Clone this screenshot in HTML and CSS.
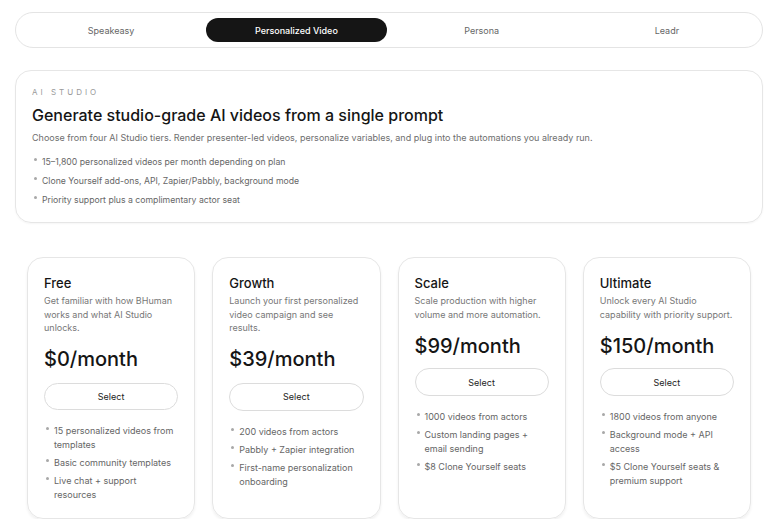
FILE: index.html
```html
<!DOCTYPE html>
<html lang="en">
<head>
<meta charset="utf-8">
<title>AI Studio Pricing</title>
<link rel="stylesheet" href="styles.css">
</head>
<body>
<div class="page">
  <nav class="tabs">
    <div class="tab">Speakeasy</div>
    <div class="tab active">Personalized Video</div>
    <div class="tab">Persona</div>
    <div class="tab">Leadr</div>
  </nav>

  <section class="hero">
    <div class="eyebrow">AI STUDIO</div>
    <h1 class="hero-title">Generate studio-grade AI videos from a single prompt</h1>
    <p class="hero-desc">Choose from four AI Studio tiers. Render presenter-led videos, personalize variables, and plug into the automations you already run.</p>
    <ul class="hero-list">
      <li>15–1,800 personalized videos per month depending on plan</li>
      <li>Clone Yourself add-ons, API, Zapier/Pabbly, background mode</li>
      <li>Priority support plus a complimentary actor seat</li>
    </ul>
  </section>

  <section class="plans">
    <div class="plan">
      <h2 class="plan-name">Free</h2>
      <p class="plan-desc">Get familiar with how BHuman works and what AI Studio unlocks.</p>
      <div class="plan-price">$0/month</div>
      <button class="plan-btn">Select</button>
      <ul class="plan-list">
        <li>15 personalized videos from templates</li>
        <li>Basic community templates</li>
        <li>Live chat + support resources</li>
      </ul>
    </div>
    <div class="plan">
      <h2 class="plan-name">Growth</h2>
      <p class="plan-desc">Launch your first personalized video campaign and see results.</p>
      <div class="plan-price">$39/month</div>
      <button class="plan-btn">Select</button>
      <ul class="plan-list">
        <li>200 videos from actors</li>
        <li>Pabbly + Zapier integration</li>
        <li>First-name personalization onboarding</li>
      </ul>
    </div>
    <div class="plan">
      <h2 class="plan-name">Scale</h2>
      <p class="plan-desc">Scale production with higher volume and more automation.</p>
      <div class="plan-price">$99/month</div>
      <button class="plan-btn">Select</button>
      <ul class="plan-list">
        <li>1000 videos from actors</li>
        <li>Custom landing pages + email sending</li>
        <li>$8 Clone Yourself seats</li>
      </ul>
    </div>
    <div class="plan">
      <h2 class="plan-name">Ultimate</h2>
      <p class="plan-desc">Unlock every AI Studio capability with priority support.</p>
      <div class="plan-price">$150/month</div>
      <button class="plan-btn">Select</button>
      <ul class="plan-list">
        <li>1800 videos from anyone</li>
        <li>Background mode + API access</li>
        <li>$5 Clone Yourself seats &amp; premium support</li>
      </ul>
    </div>
  </section>
</div>
</body>
</html>
```

FILE: styles.css
```css
* { box-sizing: border-box; }

html, body {
  margin: 0;
  padding: 0;
  background: #ffffff;
}

body {
  font-family: Inter, "Noto Sans", "DejaVu Sans", sans-serif;
  color: #151515;
}

.page {
  padding: 12px 17px 0 15px;
}

.tabs {
  display: grid;
  grid-template-columns: repeat(4, 1fr);
  gap: 5px;
  padding: 5px;
  border: 1px solid #e4e4e4;
  border-radius: 18px;
}

.tab {
  height: 24px;
  line-height: 25px;
  text-align: center;
  font-size: 9px;
  color: #666666;
  border-radius: 12px;
}

.tab.active {
  background: #151515;
  color: #ffffff;
  font-weight: 500;
}

.hero {
  margin-top: 22px;
  padding: 15px 16px 15px 16px;
  border: 1px solid #e6e6e6;
  border-radius: 16px;
  box-shadow: 0 1px 2px rgba(0, 0, 0, 0.04);
}

.eyebrow {
  font-size: 8px;
  line-height: 12px;
  letter-spacing: 3px;
  color: #9a9a9a;
}

.hero-title {
  margin: 6px 0 0;
  font-size: 16px;
  line-height: 22px;
  font-weight: 500;
  color: #151515;
}

.hero-desc {
  margin: 5px 0 0;
  font-size: 9px;
  line-height: 14px;
  color: #6e6e6e;
}

.hero-list {
  list-style: none;
  margin: 10px 0 0;
  padding: 0;
  display: flex;
  flex-direction: column;
  gap: 5px;
}

.hero-list li,
.plan-list li {
  position: relative;
  padding-left: 10px;
  font-size: 9px;
  line-height: 14px;
  color: #666666;
}

.hero-list li {
  font-size: 8.7px;
}

.hero-list li::before,
.plan-list li::before {
  content: "";
  position: absolute;
  left: 2px;
  top: 3px;
  width: 3px;
  height: 3px;
  border-radius: 50%;
  background: #a8a8a8;
}

.plans {
  margin-top: 34px;
  padding: 0 12px;
  display: grid;
  grid-template-columns: repeat(4, 1fr);
  gap: 17px;
}

.plan {
  height: 262px;
  padding: 16px 16px;
  border: 1px solid #e6e6e6;
  border-radius: 16px;
  box-shadow: 0 2px 3px rgba(0, 0, 0, 0.06);
  display: flex;
  flex-direction: column;
}

.plan-name {
  margin: 0;
  font-size: 13px;
  line-height: 18px;
  font-weight: 500;
  color: #151515;
}

.plan-desc {
  margin: 2px 0 0;
  font-size: 9px;
  line-height: 13.5px;
  color: #777777;
}

.plan-price {
  margin-top: 11px;
  font-size: 20px;
  line-height: 26px;
  font-weight: 500;
  color: #151515;
}

.plan:nth-child(3) .plan-price,
.plan:nth-child(4) .plan-price {
  margin-top: 12px;
}

.plan-btn {
  margin-top: 11px;
  height: 28px;
  width: 100%;
  border: 1px solid #dcdcdc;
  border-radius: 14px;
  background: #ffffff;
  font-family: inherit;
  font-size: 9px;
  color: #222222;
}

.plan:nth-child(3) .plan-btn,
.plan:nth-child(4) .plan-btn {
  margin-top: 9px;
}

.plan-list {
  list-style: none;
  margin: 14px 0 0;
  padding: 0;
  display: flex;
  flex-direction: column;
  gap: 4px;
}
```
